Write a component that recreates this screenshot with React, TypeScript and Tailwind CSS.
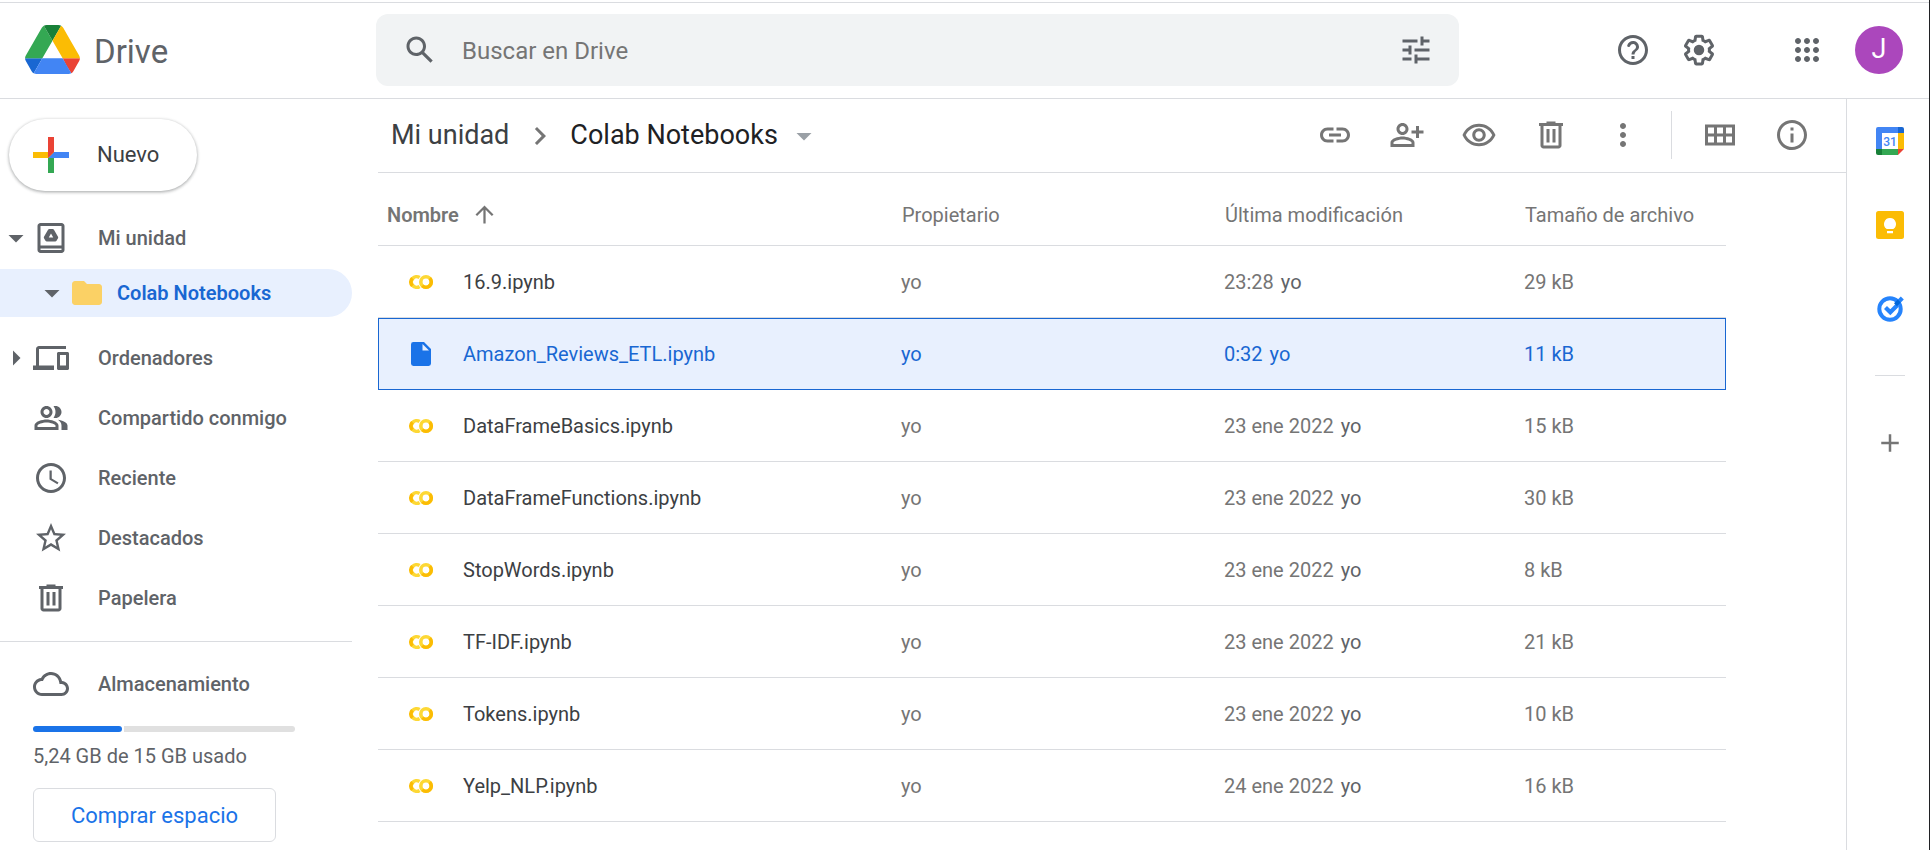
import React from "react";

type IconProps = { d: string; size?: string; className?: string };

function Icon({ d, size = "size-9", className = "" }: IconProps) {
  return (
    <svg viewBox="0 0 24 24" className={`${size} shrink-0 ${className}`} fill="currentColor" aria-hidden="true">
      <path d={d} />
    </svg>
  );
}

const P = {
  search:
    "M20.49 19l-5.73-5.73C15.53 12.2 16 10.91 16 9.5 16 5.91 13.09 3 9.5 3S3 5.91 3 9.5 5.91 16 9.5 16c1.41 0 2.7-.47 3.77-1.24L19 20.49 20.49 19zM5 9.5C5 7.01 7.01 5 9.5 5S14 7.01 14 9.5 11.99 14 9.5 14 5 11.99 5 9.5z",
  tune: "M3 17v2h6v-2H3zM3 5v2h10V5H3zm10 16v-2h8v-2h-8v-2h-2v6h2zM7 9v2H3v2h4v2h2V9H7zm14 4v-2H11v2h10zm-6-4h2V7h4V5h-4V3h-2v6z",
  help: "M12 2C6.48 2 2 6.48 2 12s4.48 10 10 10 10-4.48 10-10S17.52 2 12 2zm0 18c-4.41 0-8-3.59-8-8s3.59-8 8-8 8 3.59 8 8-3.59 8-8 8zm-1-4h2v2h-2v-2zm1.61-9.96c-2.06-.3-3.88.97-4.43 2.79-.18.58.26 1.17.87 1.17h.2c.41 0 .74-.29.88-.67.32-.89 1.27-1.5 2.3-1.28.95.2 1.65 1.13 1.57 2.1-.1 1.34-1.62 1.63-2.45 2.88 0 .01-.01.01-.01.02-.01.02-.02.03-.03.05-.09.15-.18.32-.25.5-.01.03-.03.05-.04.08-.01.02-.01.04-.02.07-.12.34-.2.75-.2 1.25h2c0-.42.11-.77.28-1.07.02-.03.03-.06.05-.09.08-.14.18-.27.28-.39.01-.01.02-.03.03-.04.1-.12.21-.23.33-.34.96-.91 2.26-1.65 1.99-3.56-.24-1.74-1.61-3.21-3.35-3.47z",
  settings:
    "M13.85 22.25h-3.7c-.74 0-1.36-.54-1.45-1.27l-.27-1.89c-.27-.14-.53-.29-.79-.46l-1.8.72c-.7.26-1.47-.03-1.81-.65L2.2 15.53c-.35-.66-.2-1.44.36-1.88l1.53-1.19c-.01-.15-.02-.3-.02-.46 0-.15.01-.31.02-.46l-1.52-1.19c-.59-.45-.74-1.26-.37-1.88l1.85-3.19c.34-.62 1.11-.9 1.79-.63l1.81.73c.26-.17.52-.32.78-.46l.27-1.91c.09-.7.71-1.25 1.44-1.25h3.7c.74 0 1.36.54 1.45 1.27l.27 1.89c.27.14.53.29.79.46l1.8-.72c.71-.26 1.48.03 1.82.65l1.84 3.18c.36.66.2 1.44-.36 1.88l-1.52 1.19c.01.15.02.3.02.46s-.01.31-.02.46l1.52 1.19c.56.45.72 1.23.37 1.86l-1.86 3.22c-.34.62-1.11.9-1.8.63l-1.8-.72c-.26.17-.52.32-.78.46l-.27 1.91c-.1.68-.72 1.22-1.46 1.22zm-3.23-2h2.76l.37-2.55.53-.22c.44-.18.88-.44 1.34-.78l.45-.34 2.38.96 1.38-2.4-2.03-1.58.07-.56c.03-.26.06-.51.06-.78s-.03-.53-.06-.78l-.07-.56 2.03-1.58-1.39-2.4-2.39.96-.45-.35c-.42-.32-.87-.58-1.33-.77l-.52-.22-.37-2.55h-2.76l-.37 2.55-.53.21c-.44.19-.88.44-1.34.79l-.45.33-2.38-.95-1.39 2.39 2.03 1.58-.07.56a7 7 0 0 0-.06.79c0 .26.02.53.06.78l.07.56-2.03 1.58 1.38 2.4 2.39-.96.45.35c.43.33.86.58 1.33.77l.53.22.38 2.55zM15.5 12a3.5 3.5 0 1 1-7 0 3.5 3.5 0 0 1 7 0z",
  apps: "M6 8c1.1 0 2-.9 2-2s-.9-2-2-2-2 .9-2 2 .9 2 2 2zm6 12c1.1 0 2-.9 2-2s-.9-2-2-2-2 .9-2 2 .9 2 2 2zm-6 0c1.1 0 2-.9 2-2s-.9-2-2-2-2 .9-2 2 .9 2 2 2zm0-6c1.1 0 2-.9 2-2s-.9-2-2-2-2 .9-2 2 .9 2 2 2zm6 0c1.1 0 2-.9 2-2s-.9-2-2-2-2 .9-2 2 .9 2 2 2zm4-8c0 1.1.9 2 2 2s2-.9 2-2-.9-2-2-2-2 .9-2 2zm-4 2c1.1 0 2-.9 2-2s-.9-2-2-2-2 .9-2 2 .9 2 2 2zm6 6c1.1 0 2-.9 2-2s-.9-2-2-2-2 .9-2 2 .9 2 2 2zm0 6c1.1 0 2-.9 2-2s-.9-2-2-2-2 .9-2 2 .9 2 2 2z",
  link: "M17 7h-4v2h4c1.65 0 3 1.35 3 3s-1.35 3-3 3h-4v2h4c2.76 0 5-2.24 5-5s-2.24-5-5-5zm-6 8H7c-1.65 0-3-1.35-3-3s1.35-3 3-3h4V7H7c-2.76 0-5 2.24-5 5s2.24 5 5 5h4v-2zm-3-4h8v2H8z",
  personAdd:
    "M9 12c2.21 0 4-1.79 4-4s-1.79-4-4-4-4 1.79-4 4 1.79 4 4 4zm0-6c1.1 0 2 .9 2 2s-.9 2-2 2-2-.9-2-2 .9-2 2-2zm0 7c-2.67 0-8 1.34-8 4v3h16v-3c0-2.66-5.33-4-8-4zm6 5H3v-.99C3.2 16.29 6.3 15 9 15s5.8 1.29 6 2v1zm3-4v-3h-3V9h3V6h2v3h3v2h-3v3h-2z",
  eye: "M12 6.5c3.79 0 7.17 2.13 8.82 5.5-1.65 3.37-5.02 5.5-8.82 5.5S4.83 15.37 3.18 12C4.83 8.63 8.21 6.5 12 6.5m0-2C7 4.5 2.73 7.61 1 12c1.73 4.39 6 7.5 11 7.5s9.27-3.11 11-7.5c-1.73-4.39-6-7.5-11-7.5zm0 5c1.38 0 2.5 1.12 2.5 2.5s-1.12 2.5-2.5 2.5-2.5-1.12-2.5-2.5 1.12-2.5 2.5-2.5m0-2c-2.48 0-4.5 2.02-4.5 4.5s2.02 4.5 4.5 4.5 4.5-2.02 4.5-4.5-2.02-4.5-4.5-4.5z",
  trash:
    "M15 4V3H9v1H4v2h1v13c0 1.1.9 2 2 2h10c1.1 0 2-.9 2-2V6h1V4h-5zm2 15H7V6h10v13zM9 8h2v9H9zm4 0h2v9h-2z",
  more: "M12 8c1.1 0 2-.9 2-2s-.9-2-2-2-2 .9-2 2 .9 2 2 2zm0 2c-1.1 0-2 .9-2 2s.9 2 2 2 2-.9 2-2-.9-2-2-2zm0 6c-1.1 0-2 .9-2 2s.9 2 2 2 2-.9 2-2-.9-2-2-2z",
  grid: "M2 5v14h20V5H2zm6 2v4H4V7h4zm-4 6h4v4H4v-4zm6 4v-4h4v4h-4zm10 0h-4v-4h4v4zm0-6h-4V7h4v4zm-6-4v4h-4V7h4z",
  info: "M11 17h2v-6h-2v6zm1-15C6.48 2 2 6.48 2 12s4.48 10 10 10 10-4.48 10-10S17.52 2 12 2zm0 18c-4.41 0-8-3.59-8-8s3.59-8 8-8 8 3.59 8 8-3.59 8-8 8zM11 9h2V7h-2v2z",
  drive:
    "M19 2H5C3.9 2 3 2.9 3 4v16c0 1.1.9 2 2 2h14c1.1 0 2-.9 2-2V4c0-1.1-.9-2-2-2zm0 18H5v-1h14v1zm0-3H5V4h14v13zM13.1 6h-2.2a1 1 0 0 0-.87.5l-2.7 4.7a1 1 0 0 0 0 1l.98 1.7c.18.31.51.5.87.5h5.64c.36 0 .69-.19.87-.5l.98-1.7a1 1 0 0 0 0-1l-2.7-4.7A1 1 0 0 0 13.1 6zm-1.1 3 1.5 2.6h-3L12 9z",
  devices:
    "M4 6h18V4H4c-1.1 0-2 .9-2 2v11H0v3h14v-3H4V6zm19 2h-6c-.55 0-1 .45-1 1v10c0 .55.45 1 1 1h6c.55 0 1-.45 1-1V9c0-.55-.45-1-1-1zm-1 9h-4v-7h4v7z",
  people:
    "M16.67 13.13C18.04 14.06 19 15.32 19 17v3h4v-3c0-2.18-3.57-3.47-6.33-3.87zM15 12c2.21 0 4-1.79 4-4s-1.79-4-4-4c-.47 0-.91.1-1.33.24C14.5 5.27 15 6.58 15 8s-.5 2.73-1.33 3.76c.42.14.86.24 1.33.24zM9 12c2.21 0 4-1.79 4-4s-1.79-4-4-4-4 1.79-4 4 1.79 4 4 4zm0-6c1.1 0 2 .9 2 2s-.9 2-2 2-2-.9-2-2 .9-2 2-2zm0 7c-2.67 0-8 1.34-8 4v3h16v-3c0-2.66-5.33-4-8-4zm6 5H3v-.99C3.2 16.29 6.3 15 9 15s5.8 1.29 6 2v1z",
  clock:
    "M11.99 2C6.47 2 2 6.48 2 12s4.47 10 9.99 10C17.52 22 22 17.52 22 12S17.52 2 11.99 2zM12 20c-4.42 0-8-3.58-8-8s3.58-8 8-8 8 3.58 8 8-3.58 8-8 8zm.5-13H11v6l5.25 3.15.75-1.23-4.5-2.67z",
  star: "M22 9.24l-7.19-.62L12 2 9.19 8.63 2 9.24l5.46 4.73L5.82 21 12 17.27 18.18 21l-1.63-7.03L22 9.24zM12 15.4l-3.76 2.27 1-4.28-3.32-2.88 4.38-.38L12 6.1l1.71 4.04 4.38.38-3.32 2.88 1 4.28L12 15.4z",
  cloud:
    "M19.35 10.04C18.67 6.59 15.64 4 12 4 9.11 4 6.6 5.64 5.35 8.04 2.34 8.36 0 10.91 0 14c0 3.31 2.69 6 6 6h13c2.76 0 5-2.24 5-5 0-2.64-2.05-4.78-4.65-4.96zM19 18H6c-2.21 0-4-1.79-4-4 0-2.05 1.53-3.76 3.56-3.97l1.07-.11.5-.95C8.08 7.14 9.94 6 12 6c2.62 0 4.88 1.86 5.39 4.43l.3 1.5 1.53.11c1.56.1 2.78 1.41 2.78 2.96 0 1.65-1.35 3-3 3z",
  arrowUp: "M4 12l1.41 1.41L11 7.83V20h2V7.83l5.58 5.59L20 12l-8-8-8 8z",
  chevron: "M10 6L8.59 7.41 13.17 12l-4.58 4.59L10 18l6-6z",
  folder: "M10 4H4c-1.1 0-1.99.9-1.99 2L2 18c0 1.1.9 2 2 2h16c1.1 0 2-.9 2-2V8c0-1.1-.9-2-2-2h-8l-2-2z",
  down: "M7 10l5 5 5-5z",
  right: "M10 17l5-5-5-5z",
  add: "M19 13h-6v6h-2v-6H5v-2h6V5h2v6h6v2z",
};

function DriveLogo() {
  return (
    <svg viewBox="0 0 87.3 78" className="h-[49px] w-[55px] shrink-0" aria-hidden="true">
      <path fill="#1967d2" d="m6.6 66.85 3.85 6.65c.8 1.4 1.95 2.5 3.3 3.3l13.75-23.8h-27.5c0 1.55.4 3.1 1.2 4.5z" />
      <path fill="#34a853" d="m43.65 25-13.75-23.8c-1.35.8-2.5 1.9-3.3 3.3l-25.4 44a9.06 9.06 0 0 0 -1.2 4.5h27.5z" />
      <path fill="#ea4335" d="m73.55 76.8c1.35-.8 2.5-1.9 3.3-3.3l1.6-2.75 7.65-13.25c.8-1.4 1.2-2.95 1.2-4.5h-27.502l5.852 11.5z" />
      <path fill="#188038" d="m43.65 25 13.75-23.8c-1.35-.8-2.9-1.2-4.5-1.2h-18.5c-1.6 0-3.15.45-4.5 1.2z" />
      <path fill="#4285f4" d="m59.8 53h-32.3l-13.75 23.8c1.35.8 2.9 1.2 4.5 1.2h50.8c1.6 0 3.15-.45 4.5-1.2z" />
      <path fill="#fbbc04" d="m73.4 26.5-12.7-22c-.8-1.4-1.95-2.5-3.3-3.3l-13.75 23.8 16.15 28h27.45c0-1.55-.4-3.1-1.2-4.5z" />
    </svg>
  );
}

function PlusLogo() {
  return (
    <svg viewBox="0 0 36 36" className="size-9 shrink-0" aria-hidden="true">
      <path fill="#34a853" d="M15 21v15h6V18z" />
      <path fill="#4285f4" d="M36 15H18l-3 6h21z" />
      <path fill="#fbbc04" d="M0 15v6h15l6-6z" />
      <path fill="#ea4335" d="M15 0v21l6-6V0z" />
    </svg>
  );
}

function ColabIcon() {
  return (
    <svg viewBox="0 0 24 24" className="size-6 shrink-0" fill="none" strokeWidth="3.6" aria-hidden="true">
      <path stroke="#fdd835" d="M10.6 7.6A5.3 5.3 0 1 0 10.6 16.4" />
      <path stroke="#fbbc04" d="M3.4 8.2A5.3 5.3 0 0 0 3.4 15.8" />
      <circle cx="17" cy="12" r="5.2" stroke="#fdd835" />
      <path stroke="#fbbc04" d="M20.7 8.3A5.2 5.2 0 0 1 13.3 15.7" />
    </svg>
  );
}

function FileIcon() {
  return (
    <svg viewBox="0 0 20 24" className="h-6 w-5 shrink-0" aria-hidden="true">
      <path fill="#1a73e8" d="M2.4 0H13l7 7v14.6a2.4 2.4 0 0 1-2.4 2.4H2.4A2.4 2.4 0 0 1 0 21.6V2.4A2.4 2.4 0 0 1 2.4 0z" />
      <path fill="#e8f0fe" d="M11.5 2v6.5H18z" />
    </svg>
  );
}

function CalendarIcon() {
  return (
    <svg viewBox="0 0 28 28" className="size-7" aria-hidden="true">
      <path fill="#4285f4" d="M2 0h20v6H6v16H0V2a2 2 0 0 1 2-2z" />
      <path fill="#1967d2" d="M22 0h4a2 2 0 0 1 2 2v4h-6z" />
      <path fill="#fbbc04" d="M22 6h6v16h-6z" />
      <path fill="#34a853" d="M6 22h16v6H6z" />
      <path fill="#188038" d="M0 22h6v6H2a2 2 0 0 1-2-2z" />
      <path fill="#ea4335" d="M22 22h6l-6 6z" />
      <path fill="#fff" d="M6 6h16v16H6z" />
      <text x="14" y="18.5" textAnchor="middle" fill="#4285f4" className="font-['Roboto',sans-serif] text-[12px] font-medium">
        31
      </text>
    </svg>
  );
}

function KeepIcon() {
  return (
    <svg viewBox="0 0 28 28" className="size-7" aria-hidden="true">
      <rect width="28" height="28" rx="2.5" fill="#fbbc04" />
      <path fill="#fff" d="M14 7a6 6 0 0 0-3.3 11h6.6A6 6 0 0 0 14 7zM11 20h6v2.3h-6z" />
    </svg>
  );
}

function TasksIcon() {
  return (
    <svg viewBox="0 0 28 28" className="size-7" fill="none" aria-hidden="true">
      <circle cx="14" cy="15" r="10.7" stroke="#2684fc" strokeWidth="4" />
      <path stroke="#2684fc" strokeWidth="4.2" d="M9.5 13.5l4.8 4.8 7.2-7.2" />
      <path stroke="#0066da" strokeWidth="4.2" d="M19.5 10.8l4.2-4.2" />
      <path stroke="#2684fc" strokeWidth="4.2" d="M23.3 7l3-3" />
    </svg>
  );
}

const navItems = [
  { label: "Ordenadores", icon: P.devices, expandable: true },
  { label: "Compartido conmigo", icon: P.people },
  { label: "Reciente", icon: P.clock },
  { label: "Destacados", icon: P.star },
  { label: "Papelera", icon: P.trash },
];

const files = [
  { name: "16.9.ipynb", date: "23:28", size: "29 kB" },
  { name: "Amazon_Reviews_ETL.ipynb", date: "0:32", size: "11 kB", selected: true },
  { name: "DataFrameBasics.ipynb", date: "23 ene 2022", size: "15 kB" },
  { name: "DataFrameFunctions.ipynb", date: "23 ene 2022", size: "30 kB" },
  { name: "StopWords.ipynb", date: "23 ene 2022", size: "8 kB" },
  { name: "TF-IDF.ipynb", date: "23 ene 2022", size: "21 kB" },
  { name: "Tokens.ipynb", date: "23 ene 2022", size: "10 kB" },
  { name: "Yelp_NLP.ipynb", date: "24 ene 2022", size: "16 kB" },
];

const tools = [
  { label: "Obtener enlace", icon: P.link },
  { label: "Compartir", icon: P.personAdd },
  { label: "Vista previa", icon: P.eye },
  { label: "Eliminar", icon: P.trash },
  { label: "Más acciones", icon: P.more },
];

const views = [
  { label: "Vista de cuadrícula", icon: P.grid },
  { label: "Ver detalles", icon: P.info },
];

function Header() {
  return (
    <header className="flex h-24 items-center border-b border-[#dadce0] pb-0.5 text-[#5f6368]">
      <a href="#" className="flex w-[376px] shrink-0 items-center gap-3.5 pl-[25px]">
        <DriveLogo />
        <span className="pt-1 text-[33px] leading-10">Drive</span>
      </a>
      <form className="flex h-[72px] max-w-[1083px] flex-1 items-center rounded-xl bg-[#f1f3f4] pr-[25px] pl-[26px]" onSubmit={(e) => e.preventDefault()}>
        <button type="submit" aria-label="Buscar" className="shrink-0">
          <Icon d={P.search} />
        </button>
        <input
          type="text"
          aria-label="Buscar en Drive"
          placeholder="Buscar en Drive"
          className="ml-6 min-w-0 flex-1 bg-transparent pt-0.5 text-2xl outline-none placeholder:text-[#757575]"
        />
        <button type="button" aria-label="Opciones de búsqueda" className="shrink-0">
          <Icon d={P.tune} />
        </button>
      </form>
      <div className="ml-auto flex shrink-0 items-center pr-[26px] pl-6">
        <button type="button" aria-label="Ayuda" className="mr-[30px]">
          <Icon d={P.help} />
        </button>
        <button type="button" aria-label="Configuración" className="mr-[72px]">
          <Icon d={P.settings} />
        </button>
        <button type="button" aria-label="Aplicaciones de Google" className="mr-[30px]">
          <Icon d={P.apps} />
        </button>
        <button type="button" aria-label="Cuenta" className="flex size-12 items-center justify-center rounded-full bg-[#ab47bc] text-[27px] text-white">
          J
        </button>
      </div>
    </header>
  );
}

function Sidebar() {
  return (
    <aside className="w-[352px] shrink-0 text-[20px] text-[#5f6368]">
      <button
        type="button"
        className="mt-5 ml-[9px] flex h-[72px] items-center gap-7 rounded-full bg-white pr-[38px] pl-6 text-[22px] font-[450] text-[#3c4043] shadow-[0_1px_3px_1px_rgba(60,64,67,0.15),0_1px_3px_0_rgba(60,64,67,0.3)]"
      >
        <PlusLogo />
        <span className="pb-0.5">Nuevo</span>
      </button>
      <nav className="mt-[17px] font-medium">
        <a href="#" className="flex h-[60px] items-center">
          <Icon d={P.down} className="-ml-0.5" />
          <Icon d={P.drive} className="-ml-px" />
          <span className="ml-[29px]">Mi unidad</span>
        </a>
        <a href="#" className="mt-px flex h-12 items-center rounded-r-full bg-[#e8f0fe] pl-[34px] font-semibold text-[#1967d2]">
          <Icon d={P.down} className="text-[#5f6368]" />
          <Icon d={P.folder} className="-ml-px text-[#fbd165]" />
          <span className="ml-3">Colab Notebooks</span>
        </a>
        <div className="mt-[11px]">
          {navItems.map((n) => (
            <a key={n.label} href="#" className="flex h-[60px] items-center">
              <span className="flex w-[33px] shrink-0">{n.expandable && <Icon d={P.right} className="-ml-0.5" />}</span>
              <Icon d={n.icon} />
              <span className="ml-[29px]">{n.label}</span>
            </a>
          ))}
        </div>
      </nav>
      <section className="mt-[13px] border-t border-[#dadce0] pt-6 pl-[33px]">
        <a href="#" className="flex items-center gap-[29px] font-medium">
          <Icon d={P.cloud} />
          Almacenamiento
        </a>
        <div className="mt-6 flex w-[262px] gap-0.5">
          <div className="h-1.5 w-[89px] rounded-full bg-[#1a73e8]" />
          <div className="h-1.5 flex-1 rounded-r-full bg-[#e0e0e0]" />
        </div>
        <p className="mt-2.5 leading-7">5,24 GB de 15 GB usado</p>
        <button type="button" className="mt-[18px] flex h-[54px] w-[243px] items-center justify-center rounded-md border border-[#dadce0] text-[22px] font-[450] text-[#1a73e8]">
          Comprar espacio
        </button>
      </section>
    </aside>
  );
}

function Toolbar() {
  return (
    <div className="flex h-[74px] items-center border-b border-[#dadce0] pb-0.5 text-[#757575]">
      <nav aria-label="Ruta" className="flex items-center pt-0.5 pl-[13px] text-[27px]">
        <a href="#" className="text-[#3c4043]">
          Mi unidad
        </a>
        <Icon d={P.chevron} className="mr-3 ml-[13px]" />
        <button type="button" className="flex items-center gap-2 text-[#202124]">
          Colab Notebooks
          <Icon d={P.down} className="text-[#9aa0a6]" />
        </button>
      </nav>
      <div className="ml-auto flex items-center gap-9 pr-9">
        {tools.map((t) => (
          <button key={t.label} type="button" aria-label={t.label}>
            <Icon d={t.icon} />
          </button>
        ))}
        <span className="-mx-1.5 h-12 w-px bg-[#dadce0]" />
        {views.map((t) => (
          <button key={t.label} type="button" aria-label={t.label}>
            <Icon d={t.icon} />
          </button>
        ))}
      </div>
    </div>
  );
}

function FileTable() {
  return (
    <div className="pr-[120px]">
      <table className="w-full table-fixed border-separate border-spacing-0 text-left text-[20px] text-[#757575]">
        <thead>
          <tr className="h-[73px]">
            <th className="border-b border-[#dadce0] pt-[11px] pl-[9px] font-semibold">
              <button type="button" className="flex items-center gap-3">
                Nombre
                <Icon d={P.arrowUp} size="size-[27px]" />
              </button>
            </th>
            <th className="w-[323px] border-b border-[#dadce0] pt-[11px] pl-px font-[450]">Propietario</th>
            <th className="w-[300px] border-b border-[#dadce0] pt-[11px] pl-px font-[450]">Última modificación</th>
            <th className="w-[202px] border-b border-[#dadce0] pt-[11px] pl-px font-[450]">Tamaño de archivo</th>
          </tr>
        </thead>
        <tbody>
          {files.map((f) => {
            const edge = f.selected ? "border-y border-[#1967d2] bg-[#e8f0fe] text-[#1967d2]" : "border-b border-[#dadce0]";
            return (
              <tr key={f.name} className="h-[72px]">
                <td className={f.selected ? `${edge} border-l pl-[29px]` : `${edge} pl-[30px]`}>
                  <div className="flex items-center gap-[29px]">
                    <span className="flex w-[26px] justify-center">{f.selected ? <FileIcon /> : <ColabIcon />}</span>
                    <span className={f.selected ? "font-[450]" : "font-[450] text-[#3c4043]"}>{f.name}</span>
                  </div>
                </td>
                <td className={edge}>yo</td>
                <td className={edge}>
                  {f.date}
                  <span className={f.selected ? "ml-[7px]" : "ml-[7px] text-[#5f6368]"}>yo</span>
                </td>
                <td className={f.selected ? `${edge} border-r` : edge}>{f.size}</td>
              </tr>
            );
          })}
        </tbody>
      </table>
    </div>
  );
}

function SidePanel() {
  return (
    <aside className="flex w-[83px] shrink-0 flex-col items-center border-l border-[#dadce0] pt-7 pl-1 text-[#757575]">
      <button type="button" aria-label="Calendar">
        <CalendarIcon />
      </button>
      <button type="button" aria-label="Keep" className="mt-14">
        <KeepIcon />
      </button>
      <button type="button" aria-label="Tasks" className="mt-[55px]">
        <TasksIcon />
      </button>
      <span className="mt-[53px] h-px w-[30px] bg-[#dadce0]" />
      <button type="button" aria-label="Obtener complementos" className="mt-[52px]">
        <Icon d={P.add} size="size-[30px]" />
      </button>
    </aside>
  );
}

export default function App() {
  return (
    <div className="flex min-h-screen flex-col overflow-hidden border-r border-[#202124] bg-white pt-0.5 font-['Roboto',sans-serif]">
      <div className="border-t border-[#dadce0]" />
      <Header />
      <div className="flex flex-1">
        <Sidebar />
        <main className="ml-[26px] min-w-0 flex-1">
          <Toolbar />
          <FileTable />
        </main>
        <SidePanel />
      </div>
    </div>
  );
}
